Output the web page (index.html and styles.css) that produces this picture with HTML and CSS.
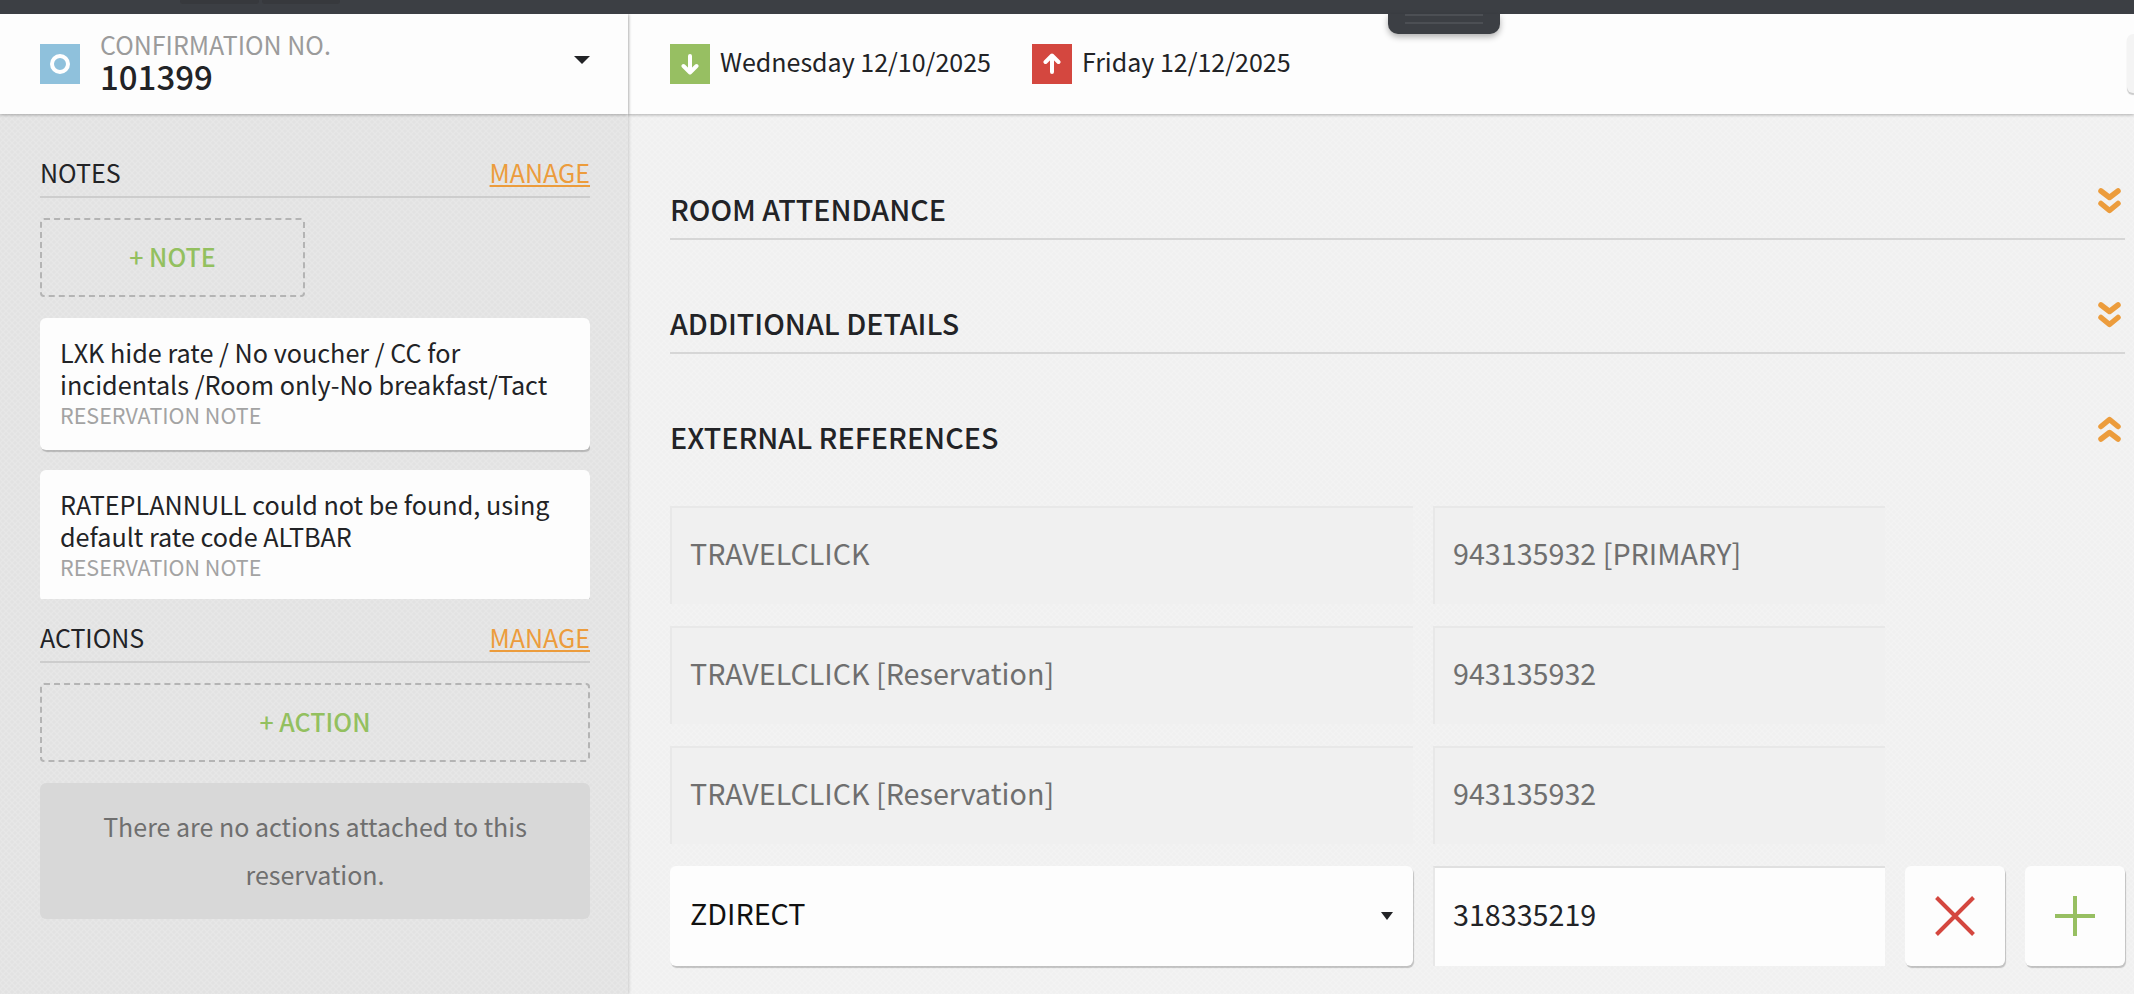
FILE: index.html
```html
<!DOCTYPE html>
<html lang="en">
<head>
  <meta charset="UTF-8">
  <title>Reservation 101399</title>
  <link rel="stylesheet" href="styles.css">
</head>
<body>

  <div class="topbar">
    <span class="topbar-tab tab-one"></span>
    <span class="topbar-tab tab-two"></span>
    <div class="handle"><span class="handle-line"></span><span class="handle-line"></span></div>
  </div>

  <div class="app">
    <aside class="side">
      <div class="side-head">
        <span class="status-icon"><span class="status-ring"></span></span>
        <div class="confirmation">
          <div class="confirmation-label">CONFIRMATION NO.</div>
          <div class="confirmation-number">101399</div>
        </div>
        <span class="head-caret"></span>
      </div>

      <div class="side-body">
        <div class="side-title">
          <span>NOTES</span>
          <a href="#" class="manage">MANAGE</a>
        </div>
        <div class="add-box add-note">+ NOTE</div>

        <div class="note-list">
          <div class="note-card">
            <p class="note-text">LXK hide rate / No voucher / CC for incidentals /Room only-No breakfast/Tact</p>
            <p class="note-type">RESERVATION NOTE</p>
          </div>
          <div class="note-card">
            <p class="note-text">RATEPLANNULL could not be found, using default rate code ALTBAR</p>
            <p class="note-type">RESERVATION NOTE</p>
          </div>
        </div>

        <div class="side-title actions-title">
          <span>ACTIONS</span>
          <a href="#" class="manage">MANAGE</a>
        </div>
        <div class="add-box">+ ACTION</div>
        <div class="empty-box">There are no actions attached to this reservation.</div>
      </div>
    </aside>

    <main class="main">
      <div class="main-head">
        <div class="date-item">
          <span class="date-icon arrive">
            <svg width="20" height="22" viewBox="0 0 20 22"><path d="M10 3V19M3.500 13L10 19.500L16.500 13" fill="none" stroke="#fff" stroke-width="4" stroke-linecap="round" stroke-linejoin="round"/></svg>
          </span>
          <span class="date-text">Wednesday 12/10/2025</span>
        </div>
        <div class="date-item">
          <span class="date-icon depart">
            <svg width="20" height="22" viewBox="0 0 20 22"><path d="M10 19V3M3.500 9L10 2.500L16.500 9" fill="none" stroke="#fff" stroke-width="4" stroke-linecap="round" stroke-linejoin="round"/></svg>
          </span>
          <span class="date-text">Friday 12/12/2025</span>
        </div>
        <span class="edge-button"></span>
      </div>

      <div class="main-body">
        <div class="section-title first">
          <h2>ROOM ATTENDANCE</h2>
          <svg class="chevrons" width="23" height="26" viewBox="0 0 23 26"><path d="M3 3L11.500 9.500L20 3M3 15.500L11.500 22.500L20 15.500" fill="none" stroke="#ec9c3c" stroke-width="5.500" stroke-linecap="round" stroke-linejoin="round"/></svg>
        </div>
        <div class="section-title">
          <h2>ADDITIONAL DETAILS</h2>
          <svg class="chevrons" width="23" height="26" viewBox="0 0 23 26"><path d="M3 3L11.500 9.500L20 3M3 15.500L11.500 22.500L20 15.500" fill="none" stroke="#ec9c3c" stroke-width="5.500" stroke-linecap="round" stroke-linejoin="round"/></svg>
        </div>
        <div class="section-title open">
          <h2>EXTERNAL REFERENCES</h2>
          <svg class="chevrons" width="23" height="26" viewBox="0 0 23 26"><path d="M3 10.500L11.500 3.500L20 10.500M3 23L11.500 16.500L20 23" fill="none" stroke="#ec9c3c" stroke-width="5.500" stroke-linecap="round" stroke-linejoin="round"/></svg>
        </div>

        <div class="ref-list">
          <div class="ref-row">
            <div class="field field-name disabled">TRAVELCLICK</div>
            <div class="field field-value disabled">943135932 [PRIMARY]</div>
          </div>
          <div class="ref-row">
            <div class="field field-name disabled">TRAVELCLICK [Reservation]</div>
            <div class="field field-value disabled">943135932</div>
          </div>
          <div class="ref-row">
            <div class="field field-name disabled">TRAVELCLICK [Reservation]</div>
            <div class="field field-value disabled">943135932</div>
          </div>
          <div class="ref-row active-row">
            <div class="field field-name select">ZDIRECT<span class="select-caret"></span></div>
            <div class="field field-value input">318335219</div>
            <button class="icon-button" aria-label="Remove">
              <svg width="40" height="40" viewBox="0 0 40 40"><path d="M1.500 1.500L38.500 38.500M38.500 1.500L1.500 38.500" fill="none" stroke="#d4473f" stroke-width="4"/></svg>
            </button>
            <button class="icon-button" aria-label="Add">
              <svg width="40" height="40" viewBox="0 0 40 40"><path d="M20 0V40M0 20H40" fill="none" stroke="#97bf62" stroke-width="4"/></svg>
            </button>
          </div>
        </div>
      </div>
    </main>
  </div>

</body>
</html>
```

FILE: styles.css
```css
* {
  box-sizing: border-box;
}

html,
body {
  height: 100%;
}

body {
  margin: 0;
  overflow: hidden;
  display: flex;
  flex-direction: column;
  font-family: "Noto Sans CJK JP", "Open Sans", sans-serif;
  font-size: 25px;
  color: #222326;
  background: #f3f3f3;
}

.topbar {
  position: relative;
  z-index: 3;
  flex: 0 0 14px;
  background: #3c3f44;
}

.topbar-tab {
  position: absolute;
  top: 0;
  height: 4px;
  background: #37393d;
  border-radius: 0 0 3px 3px;
}

.tab-one {
  left: 180px;
  width: 79px;
}

.tab-two {
  left: 262px;
  width: 78px;
}

.handle {
  position: absolute;
  top: 14px;
  left: 1388px;
  width: 112px;
  height: 20px;
  padding: 0 17px;
  background: #3c3f44;
  border-radius: 0 0 10px 10px;
  box-shadow: 0 3px 6px rgba(0, 0, 0, 0.3);
}

.handle-line {
  display: block;
  height: 2px;
  margin-bottom: 6px;
  background: #4c4f54;
}

.app {
  flex: 1;
  display: flex;
  min-height: 0;
}

/* left column */
.side {
  position: relative;
  z-index: 1;
  flex: 0 0 628px;
  background-color: #e7e7e7;
  background-image:
    radial-gradient(rgba(0, 0, 0, 0.018) 35%, transparent 40%),
    radial-gradient(rgba(0, 0, 0, 0.018) 35%, transparent 40%);
  background-position: 0 0, 3px 3px;
  background-size: 6px 6px;
  box-shadow: 1px 0 3px rgba(0, 0, 0, 0.16);
}

.side-head {
  display: flex;
  align-items: center;
  height: 100px;
  padding: 0 38px 0 40px;
  background: #fdfdfd;
  box-shadow: 0 1px 3px rgba(0, 0, 0, 0.28);
}

.status-icon {
  display: flex;
  align-items: center;
  justify-content: center;
  width: 40px;
  height: 40px;
  background: #8fc1dc;
}

.status-ring {
  width: 20px;
  height: 20px;
  border: 4px solid #fff;
  border-radius: 50%;
}

.confirmation {
  flex: 1;
  margin-left: 20px;
  padding-bottom: 9px;
}

.confirmation-label {
  line-height: 32px;
  color: #9b9b9b;
}

.confirmation-number {
  font-size: 33px;
  font-weight: 500;
  line-height: 32px;
}

.head-caret {
  width: 0;
  height: 0;
  margin-top: -8px;
  border-top: 8px solid #222326;
  border-left: 8px solid transparent;
  border-right: 8px solid transparent;
}

.side-body {
  padding: 36px 38px 0 40px;
}

.side-title {
  display: flex;
  justify-content: space-between;
  align-items: center;
  height: 48px;
  padding-bottom: 2px;
  border-bottom: 2px solid #cdcdcd;
}

.manage {
  color: #ec9c3c;
}

.add-box {
  display: flex;
  align-items: center;
  justify-content: center;
  height: 79px;
  margin-top: 20px;
  padding-bottom: 4px;
  border: 2px dashed #b4b4b4;
  border-radius: 4px;
  color: #93c05f;
  font-weight: 500;
}

.add-note {
  width: 265px;
}

.note-list {
  height: 281px;
  margin-top: 21px;
  overflow: hidden;
}

.note-card {
  height: 132px;
  margin-bottom: 20px;
  padding: 18px 20px 0;
  background: #fdfdfd;
  border-radius: 6px;
  box-shadow: 1px 2px 1px rgba(0, 0, 0, 0.2);
}

.note-text {
  margin: 0;
  font-size: 25.200px;
  line-height: 32px;
}

.note-type {
  margin: 0;
  font-size: 21.500px;
  line-height: 30px;
  color: #a3a3a3;
}

.actions-title {
  height: 64px;
  padding-top: 15px;
}

.empty-box {
  height: 136px;
  margin-top: 21px;
  padding: 19px 40px 0;
  background: #d8d8d8;
  border-radius: 6px;
  color: #6f6f6f;
  line-height: 48px;
  text-align: center;
}

/* right column */
.main {
  flex: 1;
  background-color: #f3f3f3;
  background-image:
    radial-gradient(rgba(0, 0, 0, 0.012) 35%, transparent 40%),
    radial-gradient(rgba(0, 0, 0, 0.012) 35%, transparent 40%);
  background-position: 0 0, 3px 3px;
  background-size: 6px 6px;
}

.main-head {
  position: relative;
  display: flex;
  align-items: center;
  height: 100px;
  padding-left: 42px;
  background: #fdfdfd;
  box-shadow: 0 1px 3px rgba(0, 0, 0, 0.28);
}

.date-item {
  display: flex;
  align-items: center;
  gap: 10px;
  margin-right: 41px;
}

.date-text {
  padding-bottom: 6px;
}

.date-icon {
  display: flex;
  align-items: center;
  justify-content: center;
  width: 40px;
  height: 40px;
}

.arrive {
  background: #97bf62;
}

.depart {
  background: #d4473f;
}

.edge-button {
  position: absolute;
  top: 20px;
  right: 0;
  width: 7px;
  height: 59px;
  background: #f4f4f4;
  border-radius: 6px 0 0 6px;
  box-shadow: 0 2px 1px rgba(0, 0, 0, 0.2);
}

.main-body {
  padding: 0 9px 0 42px;
}

.section-title {
  display: flex;
  justify-content: space-between;
  align-items: center;
  height: 114px;
  padding: 52px 4px 0 0;
  border-bottom: 2px solid #d6d6d6;
}

.section-title.first {
  height: 126px;
  padding-top: 64px;
}

.section-title.open {
  padding-top: 50px;
  border-bottom: none;
}

.section-title h2 {
  margin: 0;
  font-size: 28.700px;
  font-weight: 500;
}

.chevrons {
  margin-top: -14px;
}

.ref-list {
  margin-top: 38px;
}

.ref-row {
  display: flex;
  gap: 20px;
  margin-bottom: 22px;
}

.active-row {
  margin-bottom: 0;
}

.field {
  display: flex;
  align-items: center;
  height: 98px;
  padding-left: 20px;
  padding-bottom: 8px;
  font-size: 28.700px;
}

.field-name {
  flex: 0 0 743px;
}

.field-value {
  flex: 0 0 452px;
}

.disabled {
  background: #f0f0f0;
  border-top: 2px solid #e8e8e8;
  border-left: 2px solid #e8e8e8;
  padding-left: 18px;
  color: #6f6f6f;
}

.select,
.input {
  height: 100px;
  background: #fdfdfd;
}

.select {
  justify-content: space-between;
  padding-right: 20px;
  border-radius: 6px;
  box-shadow: 1px 2px 1px rgba(0, 0, 0, 0.2);
  color: #111;
}

.input {
  border-top: 2px solid #e0e0e0;
  border-left: 2px solid #e8e8e8;
  padding-left: 18px;
}

.select-caret {
  width: 0;
  height: 0;
  margin-top: 8px;
  border-top: 8px solid #222326;
  border-left: 6px solid transparent;
  border-right: 6px solid transparent;
}

.icon-button {
  display: flex;
  align-items: center;
  justify-content: center;
  flex: 0 0 100px;
  height: 100px;
  padding: 0;
  border: none;
  border-radius: 6px;
  background: #fdfdfd;
  box-shadow: 1px 2px 1px rgba(0, 0, 0, 0.2);
}
```
